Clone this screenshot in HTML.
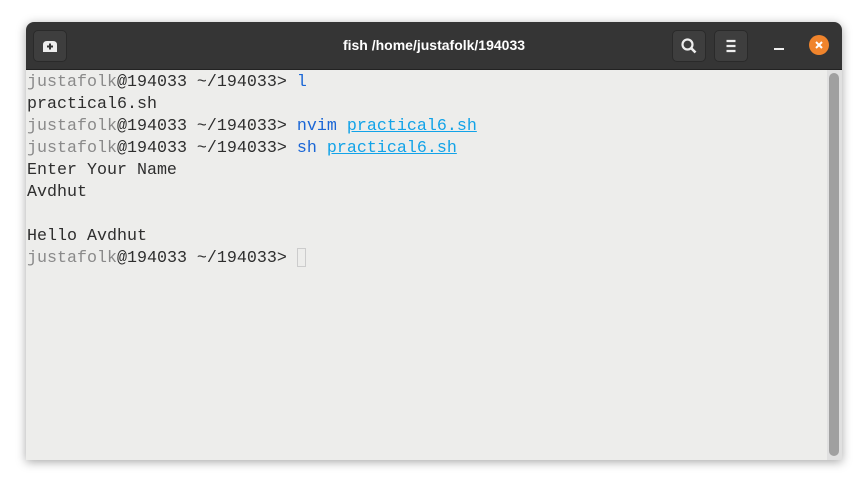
<!DOCTYPE html>
<html><head><style>
body{margin:0;width:868px;height:488px;background:#fff;position:relative;overflow:hidden;font-family:"Liberation Sans",sans-serif}
.win{position:absolute;left:26px;top:22px;width:816px;height:438px;background:#ededeb;border-radius:8px 8px 0 0;box-shadow:0 2px 10px rgba(0,0,0,.35);overflow:hidden}
.hb{position:absolute;left:0;top:0;width:816px;height:47px;background:#353535;border-bottom:1px solid #222}
.btn{position:absolute;top:8px;width:34px;height:32px;background:#3e3e3e;border:1px solid #2a2a2a;border-radius:5px;box-sizing:border-box}
.title{position:absolute;left:0;width:816px;top:15px;text-align:center;color:#fff;font-weight:bold;font-size:14px}
.term{position:absolute;left:1px;top:50px;font-family:"Liberation Mono",monospace;font-size:16.67px;line-height:22px;color:#2e2e2e;white-space:pre}
.g{color:#8a8a8a}.b{color:#1a66d6}.u{color:#12a3e8;text-decoration:underline}
.sb{position:absolute;left:803px;top:51px;width:10px;height:383px;background:#a0a0a0;border-radius:5px}
.sbt{position:absolute;left:801px;top:48px;width:15px;height:390px;background:#e0e0e0}
</style></head><body>
<div class="win">
<div class="hb">
<div class="btn" style="left:7px"><svg width="32" height="30"><path d="M9 21v-7q0-4 4-4h6q4 0 4 4v7z" fill="#eee"/><path d="M16 12.5v6M13 15.5h6" stroke="#353535" stroke-width="2"/></svg></div>
<div class="title">fish /home/justafolk/194033</div>
<div class="btn" style="left:646px"><svg width="32" height="30"><circle cx="14.5" cy="13.5" r="5" stroke="#eee" stroke-width="2.2" fill="none"/><path d="M18 17l4.5 4.5" stroke="#eee" stroke-width="2.6"/></svg></div>
<div class="btn" style="left:688px"><svg width="32" height="30"><path d="M11.5 10h9M11.5 15h9M11.5 20h9" stroke="#eee" stroke-width="2.2"/></svg></div>
<div style="position:absolute;left:748px;top:26px;width:10px;height:2px;background:#eee"></div>
<div style="position:absolute;left:783px;top:13px;width:20px;height:20px;border-radius:50%;background:#f0842c"><svg width="20" height="20"><path d="M7 7l6 6M13 7l-6 6" stroke="#fff" stroke-width="2"/></svg></div>
</div>
<div class="sbt"></div><div class="sb"></div>
<div class="term"><span class="g">justafolk</span>@194033 ~/194033&gt; <span class="b">l</span>
practical6.sh
<span class="g">justafolk</span>@194033 ~/194033&gt; <span class="b">nvim</span> <span class="u">practical6.sh</span>
<span class="g">justafolk</span>@194033 ~/194033&gt; <span class="b">sh</span> <span class="u">practical6.sh</span>
Enter Your Name
Avdhut

Hello Avdhut
<span class="g">justafolk</span>@194033 ~/194033&gt; <span style="display:inline-block;width:9px;height:19px;border:1px solid #ccc;box-sizing:border-box;vertical-align:-5px"></span></div>
</div>
</body></html>
